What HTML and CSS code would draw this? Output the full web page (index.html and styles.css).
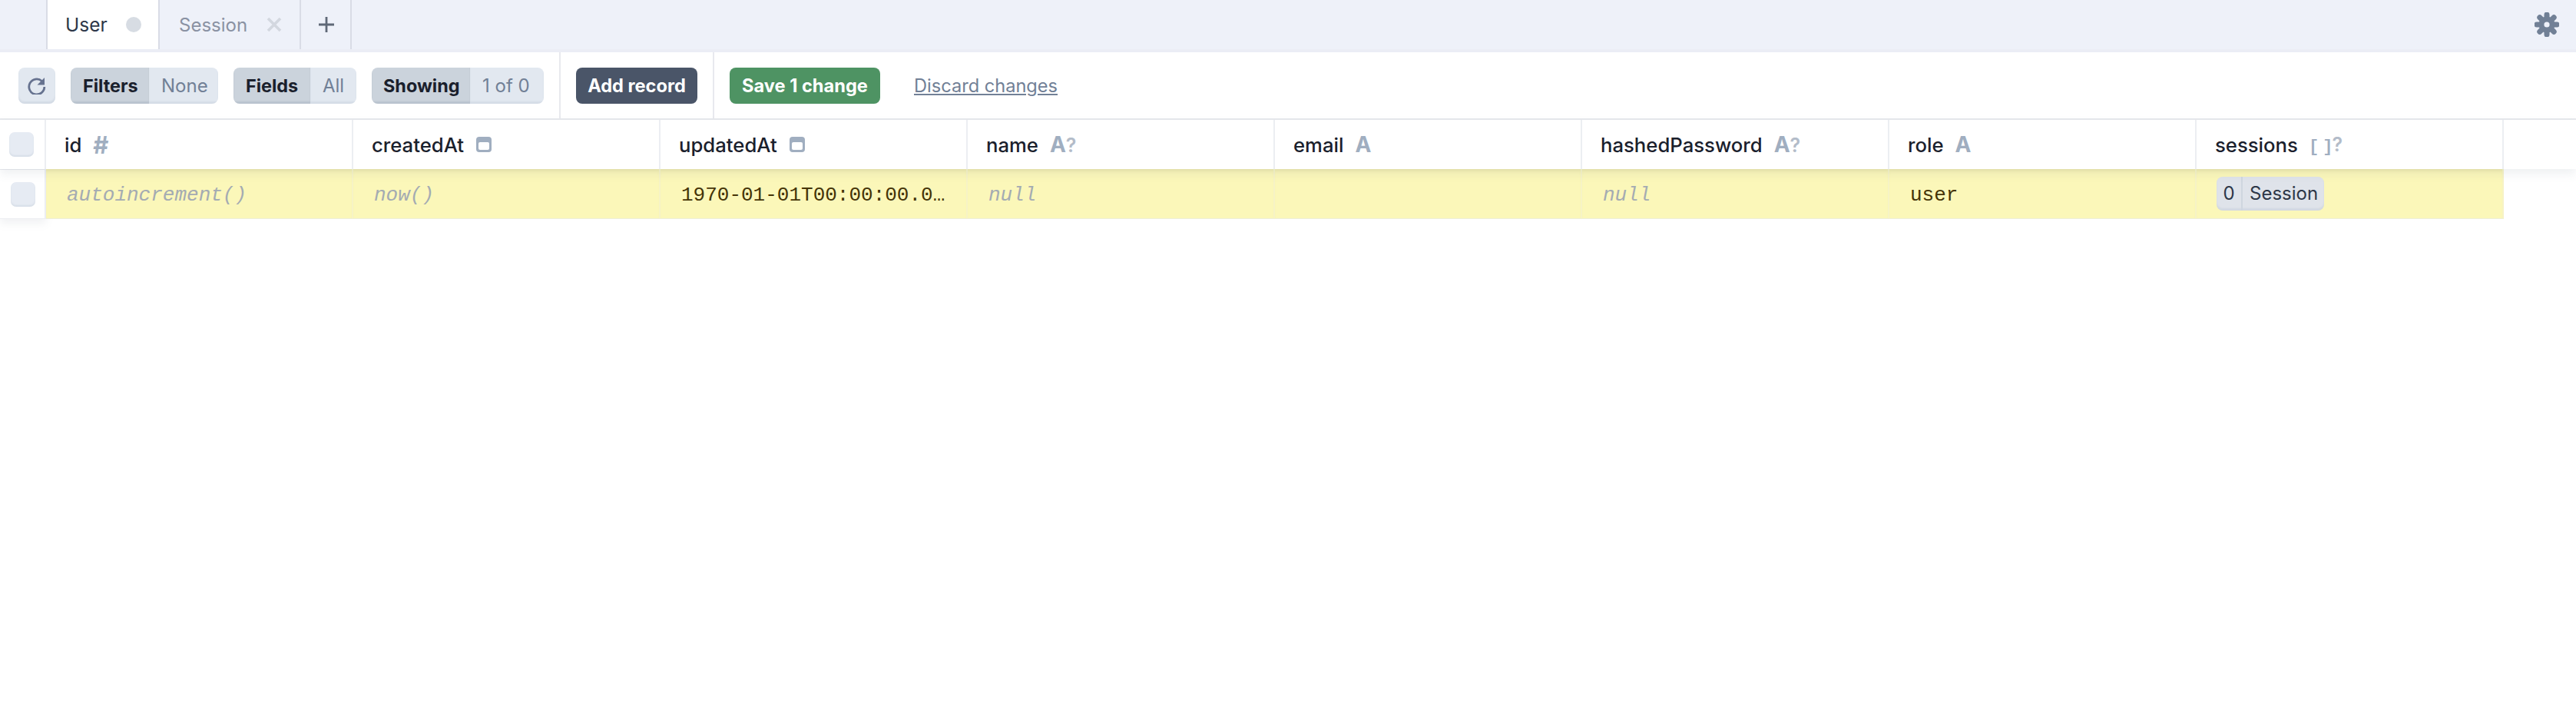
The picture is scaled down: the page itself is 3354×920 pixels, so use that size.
FILE: index.html
```html
<!DOCTYPE html>
<html lang="en">
<head>
<meta charset="utf-8">
<title>Prisma Studio</title>
<link rel="stylesheet" href="styles.css">
</head>
<body>
<div class="tabbar">
  <div class="tab tab-active"><span>User</span><span class="dot"></span></div>
  <div class="tab tab-idle"><span>Session</span>
    <svg class="close" viewBox="0 0 20 20"><path d="M2 2L18 18M18 2L2 18"/></svg>
  </div>
  <div class="tab tab-add">
    <svg class="plus" viewBox="0 0 20 20"><path d="M10 0V20M0 10H20"/></svg>
  </div>
  <svg class="gear" viewBox="0 0 32 32">
    <g class="teeth">
      <path d="M16 3V29"/><path d="M3 16H29"/><path d="M6.8 6.8L25.2 25.2"/><path d="M25.2 6.8L6.8 25.2"/>
    </g>
    <circle class="gear-body" cx="16" cy="16" r="10.5"/>
    <circle class="gear-hole" cx="16" cy="16" r="3.6"/>
  </svg>
</div>

<div class="toolbar">
  <div class="tool-section tool-main">
    <button class="icon-btn">
      <svg viewBox="0 0 24 24"><path class="arc" d="M18.5 6.5A10 10 0 1 0 21.8 14"/><path class="arrow" d="M22 2V11.5H12.5Z"/></svg>
    </button>
    <div class="group"><span class="g-label">Filters</span><span class="g-value g-none">None</span></div>
    <div class="group"><span class="g-label g-fields">Fields</span><span class="g-value g-all">All</span></div>
    <div class="group"><span class="g-label g-showing">Showing</span><span class="g-value g-count">1 of 0</span></div>
  </div>
  <div class="tool-section tool-add"><button class="btn btn-dark">Add record</button></div>
  <div class="tool-save">
    <button class="btn btn-green">Save 1 change</button>
    <a class="discard">Discard changes</a>
  </div>
</div>

<div class="table">
  <div class="row head">
    <div class="check-cell"><span class="check"></span></div>
    <div class="cell"><span class="name">id</span><span class="type type-hash">#</span></div>
    <div class="cell"><span class="name">createdAt</span><svg class="cal" viewBox="0 0 20 20"><rect class="cal-b" x="0" y="0" width="20" height="20" rx="4"/><rect class="cal-i" x="3" y="7" width="14" height="10" rx="2"/></svg></div>
    <div class="cell"><span class="name">updatedAt</span><svg class="cal" viewBox="0 0 20 20"><rect class="cal-b" x="0" y="0" width="20" height="20" rx="4"/><rect class="cal-i" x="3" y="7" width="14" height="10" rx="2"/></svg></div>
    <div class="cell"><span class="name">name</span><span class="type type-a">A<span class="q">?</span></span></div>
    <div class="cell"><span class="name">email</span><span class="type type-a">A</span></div>
    <div class="cell"><span class="name">hashedPassword</span><span class="type type-a">A<span class="q">?</span></span></div>
    <div class="cell"><span class="name">role</span><span class="type type-a">A</span></div>
    <div class="cell"><span class="name">sessions</span><span class="type type-list">[ ]<span class="q q-list">?</span></span></div>
  </div>
  <div class="row body">
    <div class="check-cell check-body"><span class="check"></span></div>
    <div class="cell val"><span class="ph">autoincrement()</span></div>
    <div class="cell val"><span class="ph">now()</span></div>
    <div class="cell val"><span class="mono">1970-01-01T00:00:00.000Z</span></div>
    <div class="cell val"><span class="ph">null</span></div>
    <div class="cell val"></div>
    <div class="cell val"><span class="ph">null</span></div>
    <div class="cell val"><span class="mono">user</span></div>
    <div class="cell val cell-pill"><div class="pill"><span class="pill-n">0</span><span class="pill-t">Session</span></div></div>
  </div>
</div>
</body>
</html>
```

FILE: styles.css
```css
* { box-sizing: border-box; }
html, body { margin: 0; padding: 0; background: #fff; }
body {
  width: 3354px;
  height: 920px;
  overflow: hidden;
  font-family: Inter, "Liberation Sans", sans-serif;
  font-size: 26px;
  color: #1a202c;
}

/* tabs */
.tabbar {
  display: flex;
  align-items: stretch;
  height: 68px;
  padding-left: 60px;
  background: #eef1f9;
  border-bottom: 4px solid #ebedf5;
}
.tab {
  display: flex;
  align-items: center;
  height: 64px;
  border-right: 2px solid #d9dce6;
  font-size: 24.5px;
}
.tab-active {
  width: 148px;
  padding-left: 23px;
  background: #fff;
  border-left: 2px solid #d9dce6;
  color: #2d3748;
}
.dot {
  width: 20px;
  height: 20px;
  margin-left: 24px;
  border-radius: 50%;
  background: #d7dce3;
}
.tab-idle {
  width: 184px;
  padding-left: 25px;
  font-size: 24px;
  color: #8a92a3;
}
.close {
  width: 20px;
  height: 20px;
  margin-left: 25px;
  fill: none;
  stroke: #d3d7df;
  stroke-width: 3.6;
}
.tab-add {
  width: 66px;
  padding-left: 23px;
}
.plus {
  width: 20px;
  height: 20px;
  fill: none;
  stroke: #5f6877;
  stroke-width: 2.8;
}
.gear {
  width: 32px;
  height: 32px;
  margin: 16px 22px 0 auto;
}
.teeth path {
  fill: none;
  stroke: #718096;
  stroke-width: 7;
  stroke-linecap: round;
}
.gear-body { fill: #718096; }
.gear-hole { fill: #eef1f9; }

/* toolbar */
.toolbar {
  display: flex;
  height: 86px;
}
.tool-section {
  display: flex;
  align-items: center;
  border-right: 2px solid #e8e9ee;
}
.tool-main {
  width: 730px;
  padding-left: 24px;
  gap: 20px;
}
.tool-add {
  width: 200px;
  padding-left: 20px;
}
.tool-save {
  display: flex;
  align-items: center;
  padding-left: 20px;
}
button {
  margin: 0;
  border: 0;
  font: inherit;
}
.icon-btn {
  display: flex;
  align-items: center;
  justify-content: center;
  width: 48px;
  height: 47px;
  padding: 0;
  border-radius: 8px;
  background: #e2e8f0;
  box-shadow: inset 0 -3px 2px rgba(160, 174, 192, 0.22);
}
.icon-btn svg { width: 24px; height: 24px; }
.arc { fill: none; stroke: #66728f; stroke-width: 2.8; }
.arrow { fill: #66728f; }
.group {
  display: flex;
  height: 47px;
  border-radius: 8px;
  overflow: hidden;
  line-height: 47px;
}
.g-label {
  width: 102px;
  padding-left: 16px;
  background: #cbd3dc;
  box-shadow: inset 0 -3px 2px rgba(113, 128, 150, 0.2);
  font-size: 23.4px;
  font-weight: 700;
  color: #1a202c;
}
.g-value {
  padding-left: 16px;
  background: #e2e8f0;
  box-shadow: inset 0 -3px 2px rgba(160, 174, 192, 0.2);
  font-size: 24px;
  color: #718096;
}
.g-none { width: 90px; }
.g-fields { width: 100px; }
.g-all { width: 60px; }
.g-showing { width: 128px; padding-left: 15px; }
.g-count { width: 96px; }
.btn {
  height: 47px;
  padding: 0;
  border-radius: 8px;
  color: #fff;
  font-size: 23.6px;
  font-weight: 700;
}
.btn-dark { width: 158px; background: #4a5568; }
.btn-green { width: 196px; background: #4e9363; }
.discard {
  margin-left: 44px;
  color: #718096;
  font-size: 23.6px;
  text-decoration: underline;
}

/* table */
.table { border-top: 2px solid #e6e8ec; }
.row { display: flex; }
.head {
  position: relative;
  z-index: 2;
  height: 64px;
  box-shadow: 0 6px 12px rgba(113, 128, 150, 0.12);
  background: #fff;
}
.body { height: 65px; }
.check-cell {
  display: flex;
  align-items: center;
  width: 60px;
  padding-left: 12px;
  border-right: 2px solid #eceef2;
  background: #fff;
}
.check-body {
  padding-left: 14px;
  border-top: 1px solid #e8eaee;
  border-bottom: 1px solid #eceef2;
  box-shadow: 0 6px 10px rgba(113, 128, 150, 0.1);
}
.check {
  width: 32px;
  height: 32px;
  border-radius: 7px;
  background: #e6ebf3;
  box-shadow: inset 0 -2px 2px rgba(160, 174, 192, 0.2);
}
.cell {
  display: flex;
  align-items: center;
  width: 400px;
  padding-left: 24px;
  border-right: 2px solid #eceef2;
}
.name { font-weight: 500; white-space: nowrap; font-size: 25.7px; }
.type {
  margin-left: 15px;
  color: #a0aec0;
  font-weight: 700;
  font-size: 28px;
}
.type-hash { font-size: 31px; line-height: 1; }
.q { font-weight: 600; font-size: 25px; color: #b3bcc9; }
.type-list {
  margin-left: 14px;
  font-family: "Liberation Mono", monospace;
  font-size: 22px;
  letter-spacing: -4px;
}
.q-list { font-family: Inter, sans-serif; letter-spacing: 0; margin-left: 3px; }
.cal { width: 20px; height: 20px; margin-left: 16px; }
.cal-b { fill: #a0aec0; }
.cal-i { fill: #fff; }

.val {
  background: #fbf7b9;
  padding: 3px 24px 0 27px;
  overflow: hidden;
  border-right-color: #f6f3c6;
  font-family: "Liberation Mono", monospace;
  font-size: 26px;
  box-shadow: inset 0 5px 4px -3px rgba(160, 150, 80, 0.15);
  border-bottom: 1px solid #eeeeda;
}
.ph {
  color: #a4abb2;
  font-style: italic;
  white-space: nowrap;
}
.mono {
  display: block;
  min-width: 0;
  overflow: hidden;
  text-overflow: ellipsis;
  white-space: nowrap;
  color: #453408;
}
.cell-pill { padding: 0 0 0 26px; }
.pill {
  display: flex;
  height: 44px;
  border-radius: 8px;
  overflow: hidden;
  background: #dfe3ea;
  box-shadow: inset 0 -3px 2px rgba(160, 174, 192, 0.2);
  font-family: Inter, "Liberation Sans", sans-serif;
  font-size: 24px;
  line-height: 44px;
  color: #2d3748;
}
.pill-n {
  width: 34px;
  text-align: center;
  border-right: 2px solid #cfd6df;
}
.pill-t { width: 106px; padding-left: 9px; }
```
